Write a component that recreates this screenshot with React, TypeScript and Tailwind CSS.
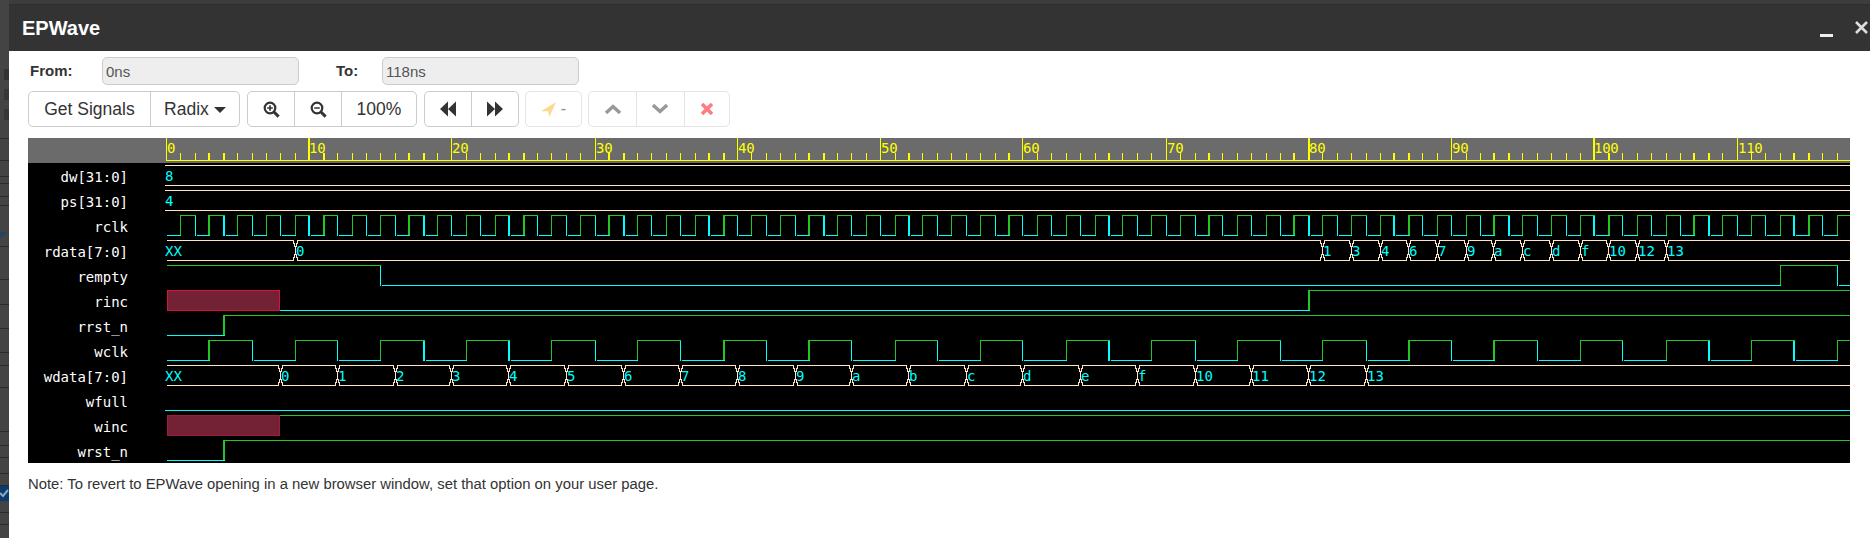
import React from 'react';

const MONO = "font-['DejaVu_Sans_Mono',monospace]";
const BISQUE = '#ffe4c4';
const CYAN = '#00ffff';
const GREEN = '#22c822';
const YELLOW = '#ffff00';

// the canvas is drawn at 11.424 css px per ns and shown at 125%, so some edges land 2px wide
const px = (t: number) => {
  const c = Math.round(t * 11.424) + 3;
  return { x: 162 + Math.round(c * 1.25), w: Math.round((c + 1) * 1.25) - Math.round(c * 1.25) };
};

const END = 1850;

type Edge = { t: number; level: 0 | 1 };

const Digital: React.FC<{ top: number; start: 0 | 1; edges: Edge[]; from?: number }> = ({ top, start, edges, from = 167 }) => {
  const hi = top;
  const lo = top + 20;
  const parts: React.ReactNode[] = [];
  let x = from;
  let level = start;
  edges.forEach((e, i) => {
    const p = px(e.t);
    parts.push(<rect key={`h${i}`} x={x} y={level ? hi : lo} width={p.x + p.w - x} height={1} fill={level ? GREEN : CYAN} />);
    parts.push(<rect key={`v${i}`} x={p.x} y={hi + (e.level ? 0 : 1)} width={p.w} height={20} fill={e.level ? GREEN : CYAN} />);
    x = p.x + p.w + (e.level ? 0 : 1);
    level = e.level;
  });
  parts.push(<rect key="end" x={x} y={level ? hi : lo} width={END - x} height={1} fill={level ? GREEN : CYAN} />);
  return <g>{parts}</g>;
};

// the little x where a bus changes value, pixel by pixel
const Crossing: React.FC<{ x: number; top: number }> = ({ x, top }) => {
  const bot = top + 20;
  const bits = [
    [x - 2, top, 1, 4],
    [x + 2, top, 1, 4],
    [x - 1, top + 3, 1, 4],
    [x + 1, top + 3, 1, 4],
    [x, top + 6, 1, 9],
    [x - 1, bot - 6, 1, 4],
    [x + 1, bot - 6, 1, 4],
    [x - 2, bot - 3, 1, 4],
    [x + 2, bot - 3, 1, 4],
  ];
  return (
    <g fill={BISQUE}>
      {bits.map(([a, b, w, h]) => (
        <rect key={`${a}-${b}`} x={a} y={b} width={w} height={h} />
      ))}
    </g>
  );
};

const Bus: React.FC<{ top: number; values: { t: number; label: string }[]; first: string; from?: number }> = ({ top, values, first, from = 167 }) => {
  const bot = top + 20;
  let x0 = from;
  const out: React.ReactNode[] = [];
  values.forEach((v, i) => {
    const xi = px(v.t).x;
    out.push(<rect key={`t${i}`} x={x0} y={top} width={xi - 2 - x0} height={1} fill={BISQUE} />);
    out.push(<rect key={`b${i}`} x={x0} y={bot} width={xi - 2 - x0} height={1} fill={BISQUE} />);
    out.push(<Crossing key={`c${i}`} x={xi} top={top} />);
    out.push(
      <text key={`l${i}`} x={xi + 1} y={top + 16} fill={CYAN} fontSize={14}>
        {v.label}
      </text>,
    );
    x0 = xi + 3;
  });
  out.push(<rect key="te" x={x0} y={top} width={END - x0} height={1} fill={BISQUE} />);
  out.push(<rect key="be" x={x0} y={bot} width={END - x0} height={1} fill={BISQUE} />);
  out.push(
    <text key="first" x={165} y={top + 16} fill={CYAN} fontSize={14}>
      {first}
    </text>,
  );
  return <g>{out}</g>;
};

const Unknown: React.FC<{ top: number; stroke: string }> = ({ top, stroke }) => (
  <rect x={167.5} y={top + 0.5} width={112} height={20} fill="#722234" stroke={stroke} strokeWidth={1} />
);

const rclkEdges: Edge[] = [];
for (let t = 1; t <= 117; t++) rclkEdges.push({ t, level: t % 2 ? 1 : 0 });

const wclkEdges: Edge[] = [];
for (let t = 3; t <= 117; t += 3) wclkEdges.push({ t, level: t % 6 === 3 ? 1 : 0 });

const rdataValues = ['0', '1', '3', '4', '6', '7', '9', 'a', 'c', 'd', 'f', '10', '12', '13'].map((label, i) => ({
  label,
  t: i === 0 ? 9 : 79 + i * 2,
}));

const wdataValues = ['0', '1', '2', '3', '4', '5', '6', '7', '8', '9', 'a', 'b', 'c', 'd', 'e', 'f', '10', '11', '12', '13'].map((label, i) => ({
  label,
  t: 8 + i * 4,
}));

const signals = ['dw[31:0]', 'ps[31:0]', 'rclk', 'rdata[7:0]', 'rempty', 'rinc', 'rrst_n', 'wclk', 'wdata[7:0]', 'wfull', 'winc', 'wrst_n'];

const Ruler = () => {
  const ticks = [];
  for (let t = 1; t <= 118; t++) ticks.push(t);
  return (
    <svg className={`block ${MONO}`} width={1685} height={25} viewBox="165 138 1685 25" shapeRendering="crispEdges">
      <rect x={166} y={160} width={1684} height={1} fill={YELLOW} />
      <rect x={166} y={138} width={1} height={22} fill={YELLOW} />
      <text x={167} y={153} fill={YELLOW} fontSize={14}>0</text>
      {ticks.map((t) => {
        const p = px(t);
        const major = t % 10 === 0;
        return (
          <g key={t}>
            <rect x={p.x} y={major ? 138 : 153} width={p.w} height={major ? 22 : 7} fill={YELLOW} />
            {major && (
              <text x={p.x + 1} y={153} fill={YELLOW} fontSize={14} letterSpacing={-0.3}>
                {t}
              </text>
            )}
          </g>
        );
      })}
    </svg>
  );
};

const Waves = () => (
  <svg className={`block ${MONO}`} width={1685} height={300} viewBox="165 163 1685 300" shapeRendering="crispEdges">
    {/* dw, ps */}
    {[165, 185, 190, 210].map((y) => (
      <rect key={y} x={165} y={y} width={1685} height={1} fill={BISQUE} />
    ))}
    <text x={165} y={181} fill={CYAN} fontSize={14}>8</text>
    <text x={165} y={206} fill={CYAN} fontSize={14}>4</text>
    <Digital top={215} start={0} edges={rclkEdges} />
    <Bus top={240} values={rdataValues} first="XX" />
    <Digital top={265} start={1} edges={[{ t: 15, level: 0 }, { t: 113, level: 1 }, { t: 117, level: 0 }]} />
    <Unknown top={290} stroke="#d8123c" />
    <Digital top={290} start={0} edges={[{ t: 80, level: 1 }]} from={280} />
    <Digital top={315} start={0} edges={[{ t: 4, level: 1 }]} />
    <Digital top={340} start={0} edges={wclkEdges} />
    <Bus top={365} values={wdataValues} first="XX" />
    <rect x={165} y={410} width={1685} height={1} fill={CYAN} />
    <Unknown top={415} stroke="#a01c3c" />
    <rect x={280} y={415} width={1570} height={1} fill={GREEN} />
    <Digital top={440} start={0} edges={[{ t: 4, level: 1 }]} />
  </svg>
);

const Cell: React.FC<{ w: string; children: React.ReactNode; faded?: boolean }> = ({ w, children, faded }) => (
  <button
    type="button"
    className={`${w} h-full flex items-center justify-center border-l first:border-l-0 ${faded ? 'border-[#e4e4e4]' : 'border-[#ccc]'} text-[#333] text-[17.5px]`}
  >
    {children}
  </button>
);

const Group: React.FC<{ className: string; faded?: boolean; children: React.ReactNode }> = ({ className, faded, children }) => (
  <div className={`${className} h-[36px] flex rounded-[5px] border bg-white overflow-hidden ${faded ? 'border-[#e4e4e4]' : 'border-[#ccc]'}`}>
    {children}
  </div>
);

const Magnifier: React.FC<{ plus?: boolean }> = ({ plus }) => (
  <svg width="17" height="17" viewBox="0 0 17 17" fill="none" stroke="#333">
    <circle cx="7" cy="7" r="5.3" strokeWidth="2.2" />
    <path d="M11 11l4.6 4.6" strokeWidth="3" />
    <path d={plus ? 'M4.2 7h5.6M7 4.2v5.6' : 'M4.2 7h5.6'} strokeWidth="1.6" />
  </svg>
);

const Back = () => (
  <svg width="16" height="16" viewBox="0 0 16 16" fill="#333">
    <path d="M0 8l8-7.5v15zM8 8l8-7.5v15z" />
  </svg>
);

const Forward = () => (
  <svg width="16" height="16" viewBox="0 0 16 16" fill="#333">
    <path d="M16 8L8 .5v15zM8 8L0 .5v15z" />
  </svg>
);

const Strip = () => {
  // dim page behind the dialog, row heights read off the picture
  const rows = [139, 22, 16, 7, 13, 9, 41, 33, 25, 24, 24, 13, 22, 44, 14, 12, 16, 12];
  return (
    <div className="w-[9px] h-full bg-[#444] flex flex-col overflow-hidden">
      {rows.map((h, i) => (
        <div key={i} className="border-b border-[#2b2b2b] shrink-0 relative" style={{ height: h }}>
          {i === 0 && (
            <div className="pt-[69px] pl-[4px] flex flex-col gap-[9px]">
              <div className="w-[5px] h-[11px] bg-[#333]" />
              <div className="w-[5px] h-[11px] bg-[#363636]" />
              <div className="w-[5px] h-[11px] bg-[#363636]" />
            </div>
          )}
          {i === 6 && (
            <div className="absolute left-0 top-[26px] w-0 h-0 border-r-[8px] border-t-[6px] border-r-transparent border-t-[#24445f]" />
          )}
        </div>
      ))}
      <div className="h-[15px] shrink-0 bg-[#0b3a6e] flex items-center">
        <svg width="9" height="9" viewBox="0 0 9 9" fill="none" stroke="#8fa5bd" strokeWidth="2">
          <path d="M0 4l3 3 5-6" />
        </svg>
      </div>
      <div className="h-[12px] shrink-0 border-b border-[#2b2b2b]" />
      <div className="h-[12px] shrink-0 border-b border-[#2b2b2b]" />
    </div>
  );
};

const App: React.FC = () => (
  <div className="w-[1870px] h-[538px] flex overflow-hidden bg-[#444] font-['Liberation_Sans',sans-serif]">
    <Strip />
    <div className="flex-1 flex flex-col">
      <div className="h-[5px] bg-[#3d3d3d] border-b border-[#2e2e2e]" />
      <div className="h-[46px] bg-[#333] flex items-center text-white">
        <h1 className="pl-[13px] text-[20px] font-bold flex-1">EPWave</h1>
        <svg className="mr-[22px] mt-[16px]" width="13" height="4" viewBox="0 0 13 4">
          <rect width="13" height="3" fill="#eee" />
        </svg>
        <svg className="mr-[2px] mt-[-2px]" width="13" height="13" viewBox="0 0 13 13" stroke="#ddd" strokeWidth="2.6">
          <path d="M1 1l11 11M12 1L1 12" />
        </svg>
      </div>
      <div className="flex-1 bg-white flex flex-col">
        <div className="mt-[6px] pl-[21px] flex items-center text-[15px] text-[#333] font-bold">
          <span className="w-[72px]">From:</span>
          <input readOnly value="0ns" className="w-[197px] h-[28px] rounded-[5px] border border-[#ccc] bg-[#eee] px-[3px] font-normal text-[#555] outline-none" />
          <span className="ml-[37px] w-[46px]">To:</span>
          <input readOnly value="118ns" className="w-[197px] h-[28px] rounded-[5px] border border-[#ccc] bg-[#eee] px-[3px] font-normal text-[#555] outline-none" />
        </div>
        <div className="mt-[6px] pl-[19px] flex">
          <Group className="w-[212px]">
            <Cell w="w-[122px]">Get Signals</Cell>
            <Cell w="w-[90px]">
              Radix
              <span className="ml-[5px] mt-[2px] w-0 h-0 border-x-[6px] border-x-transparent border-t-[6px] border-t-[#333]" />
            </Cell>
          </Group>
          <Group className="w-[170px] ml-[7px]">
            <Cell w="w-[47px]"><Magnifier plus /></Cell>
            <Cell w="w-[47px]"><Magnifier /></Cell>
            <Cell w="w-[76px]">100%</Cell>
          </Group>
          <Group className="w-[95px] ml-[7px]">
            <Cell w="w-[47px]"><Back /></Cell>
            <Cell w="w-[48px]"><Forward /></Cell>
          </Group>
          <Group className="w-[57px] ml-[6px]" faded>
            <Cell w="w-full" faded>
              <svg width="15" height="15" viewBox="0 0 15 15" fill="#ffd88f">
                <path d="M15 0L0 9.3h7.2L8.4 15z" />
              </svg>
              <span className="ml-[5px] text-[#999]">-</span>
            </Cell>
          </Group>
          <Group className="w-[142px] ml-[6px]" faded>
            <Cell w="w-[48px]" faded>
              <svg width="16" height="10" viewBox="0 0 16 10" fill="none" stroke="#999" strokeWidth="3.4">
                <path d="M1 9l7-6.5L15 9" />
              </svg>
            </Cell>
            <Cell w="w-[48px]" faded>
              <svg width="16" height="10" viewBox="0 0 16 10" fill="none" stroke="#999" strokeWidth="3.4">
                <path d="M1 1l7 6.5L15 1" />
              </svg>
            </Cell>
            <Cell w="w-[46px]" faded>
              <svg width="12" height="12" viewBox="0 0 12 12" fill="none" stroke="#ff7b80" strokeWidth="3.6">
                <path d="M1 1l10 10M11 1L1 11" />
              </svg>
            </Cell>
          </Group>
        </div>
        <div className="mt-[11px] ml-[19px] w-[1822px] bg-black">
          <div className="h-[25px] bg-[#6b6b6b] flex">
            <div className="w-[137px]" />
            <Ruler />
          </div>
          <div className="h-[300px] flex">
            <ul className={`w-[137px] pt-[2px] pr-[37px] text-right text-[14px] text-white ${MONO}`}>
              {signals.map((s) => (
                <li key={s} className="h-[25px] leading-[25px] whitespace-pre">
                  {s}
                </li>
              ))}
            </ul>
            <Waves />
          </div>
        </div>
        <p className="mt-[10px] ml-[19px] text-[14.85px] text-[#333]">
          Note: To revert to EPWave opening in a new browser window, set that option on your user page.
        </p>
      </div>
    </div>
  </div>
);

export default App;
